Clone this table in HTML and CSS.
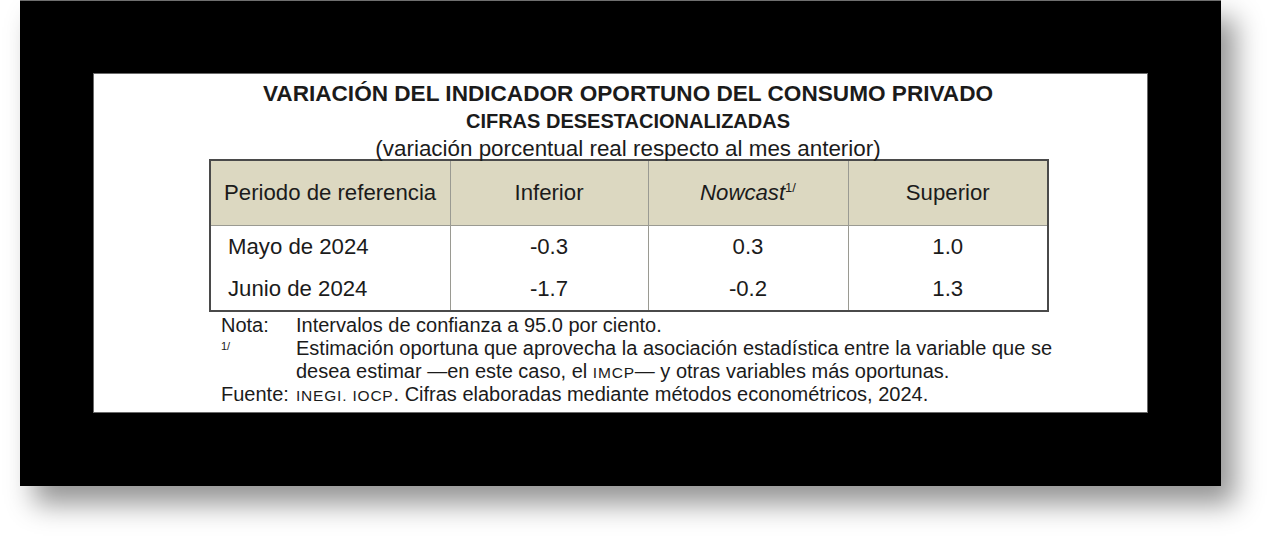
FILE: index.html
```html
<!DOCTYPE html>
<html lang="es">
<head>
<meta charset="utf-8">
<title>Indicador Oportuno del Consumo Privado</title>
<link rel="stylesheet" href="styles.css">
</head>
<body>
<div class="frame">
  <div class="panel">
    <div class="content">
      <h1 class="title">VARIACIÓN DEL INDICADOR OPORTUNO DEL CONSUMO PRIVADO</h1>
      <h2 class="subtitle">CIFRAS DESESTACIONALIZADAS</h2>
      <p class="unit">(variación porcentual real respecto al mes anterior)</p>
      <table class="data">
        <colgroup>
          <col class="w1">
          <col class="w2">
          <col class="w3">
          <col class="w4">
        </colgroup>
        <thead>
          <tr>
            <th class="c-period">Periodo de referencia</th>
            <th>Inferior</th>
            <th><em>Nowcast</em><sup>1/</sup></th>
            <th>Superior</th>
          </tr>
        </thead>
        <tbody>
          <tr>
            <td class="c-period">Mayo de 2024</td>
            <td>-0.3</td>
            <td>0.3</td>
            <td>1.0</td>
          </tr>
          <tr>
            <td class="c-period">Junio de 2024</td>
            <td>-1.7</td>
            <td>-0.2</td>
            <td>1.3</td>
          </tr>
        </tbody>
      </table>
      <div class="notes">
        <span class="lbl">Nota:</span>
        <span class="txt">Intervalos de confianza a 95.0 por ciento.</span>
        <span class="lbl"><sup class="fn">1/</sup></span>
        <span class="txt">Estimación oportuna que aprovecha la asociación estadística entre la variable que se<br>desea estimar —en este caso, el <span class="sc">IMCP</span>— y otras variables más oportunas.</span>
        <span class="lbl">Fuente:</span>
        <span class="txt"><span class="sc">INEGI. IOCP</span>. Cifras elaboradas mediante métodos econométricos, 2024.</span>
      </div>
    </div>
  </div>
</div>
</body>
</html>
```
FILE: styles.css
```css
html, body {
  margin: 0;
  padding: 0;
  background: #ffffff;
}

body {
  font-family: "Liberation Sans", Arial, sans-serif;
  color: #1b1b1b;
  min-height: 552px;
  padding-bottom: 1px;
  box-sizing: border-box;
}

.frame {
  margin-left: 20px;
  width: 1201px;
  height: 486px;
  box-sizing: border-box;
  background: #000;
  border-top: 1px solid #6f6f6f;
  padding: 72px 0 0 73px;
  box-shadow: 14px 18px 26px rgba(0, 0, 0, 0.42);
}

.panel {
  width: 1055px;
  height: 340px;
  box-sizing: border-box;
  background: #fff;
  border: 1px solid #6a6a6a;
  padding: 8px 0 0 115px;
}

.content {
  width: 838px;
}

.title {
  margin: 0;
  text-align: center;
  font-size: 22.6px;
  font-weight: bold;
  line-height: 24px;
}

.subtitle {
  margin: 4px 0 0;
  text-align: center;
  font-size: 20px;
  font-weight: bold;
  line-height: 22px;
}

.unit {
  margin: 5px 0 -2px;
  text-align: center;
  font-size: 22.4px;
  line-height: 24px;
}

.data {
  width: 838px;
  table-layout: fixed;
  border-collapse: collapse;
  border: 2px solid #4a4a4a;
  font-size: 22.2px;
}

.w1 { width: 240px; }
.w2 { width: 198px; }
.w3 { width: 200px; }
.w4 { width: 200px; }

.data th,
.data td {
  border-left: 1px solid #9a9a92;
  text-align: center;
  font-weight: normal;
  padding: 0;
}

.data th:first-child,
.data td:first-child {
  border-left: none;
}

.data th {
  background: #dcd8c1;
  height: 64px;
  border-bottom: 1px solid #9a9a92;
}

.data td {
  height: 42px;
}

.data th.c-period {
  text-align: left;
  padding-left: 13px;
}

.data td.c-period {
  text-align: left;
  padding-left: 17px;
}

.data sup {
  font-size: 13px;
  vertical-align: 8px;
  line-height: 0;
}

.notes {
  display: grid;
  grid-template-columns: 75px 780px;
  padding-left: 12px;
  font-size: 20px;
  line-height: 23px;
  margin-top: 2px;
}

.lbl {
  white-space: nowrap;
}

.fn {
  font-size: 11px;
  vertical-align: 5px;
  line-height: 0;
}

.sc {
  font-size: 15.5px;
  letter-spacing: 0.8px;
  line-height: 0;
}
```
